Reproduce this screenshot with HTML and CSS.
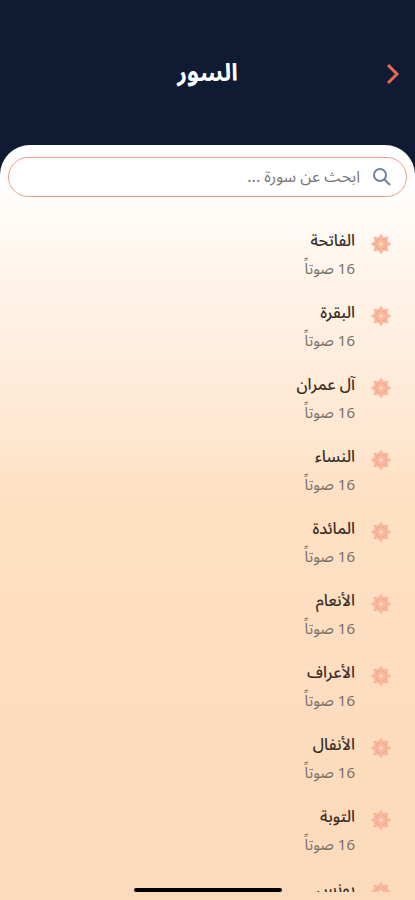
FILE: index.html
```html
<!DOCTYPE html>
<html lang="ar" dir="rtl">
<head>
    <meta charset="UTF-8">
    <meta name="viewport" content="width=device-width, initial-scale=1.0">
    <title>السور</title>
    <link rel="stylesheet" href="styles.css">
</head>
<body>
    <header class="header">
        <button class="back" type="button" aria-label="رجوع">
            <svg width="14" height="22" viewBox="0 0 14 22"><path d="M2 2 L11 11 L2 20"/></svg>
        </button>
        <h1>السور</h1>
    </header>

    <main class="sheet">
        <label class="search">
            <svg width="20" height="20" viewBox="0 0 20 20"><circle cx="8" cy="8" r="6"/><path d="M12 12 L18 18"/></svg>
            <input type="text" id="search" placeholder="ابحث عن سورة ..." aria-label="ابحث عن سورة">
        </label>
        <ul class="list" id="list"></ul>
    </main>

    <div class="home-bar"></div>

    <script src="script.js"></script>
</body>
</html>
```
FILE: styles.css
```css
* {
    box-sizing: border-box;
}
body {
    display: flex;
    flex-direction: column;
    height: 100vh;
    margin: 0;
    overflow: hidden;
    background-color: #0e1b32;
    font-family: "Noto Sans Arabic", "Noto Sans", "DejaVu Sans", sans-serif;
}
.header {
    display: grid;
    grid-template-columns: 44px 1fr 44px;
    align-items: center;
    height: 145px;
    padding-top: 2px;
    flex-shrink: 0;
}
.header h1 {
    margin: 0;
    color: #fff;
    font-size: 24px;
    line-height: 36px;
    text-align: center;
}
.back {
    display: flex;
    justify-content: center;
    padding: 8px;
    border: 0;
    background: none;
    cursor: pointer;
}
.back path {
    fill: none;
    stroke: #e8694f;
    stroke-width: 3;
}

/* Panel */
.sheet {
    display: flex;
    flex-direction: column;
    flex: 1;
    min-height: 0;
    padding: 12px 8px 8px;
    border-radius: 30px 30px 0 0;
    background: linear-gradient(#fff 0%, #fffdfa 7%, #fff2e6 20%, #ffe9d5 35%, #fee0c2 48%, #fdddbf 70%, #fcdbbc 100%);
}
.search {
    display: flex;
    align-items: center;
    flex-shrink: 0;
    gap: 12px;
    height: 40px;
    padding: 0 14px;
    border: 1px solid #ee9c8d;
    border-radius: 20px;
    background-color: #fff;
}
.search svg {
    fill: none;
    stroke: #71839a;
    stroke-width: 2;
}
.search input {
    flex: 1;
    min-width: 0;
    padding: 0;
    border: 0;
    outline: 0;
    background: none;
    color: #333;
    font-family: inherit;
    font-size: 16px;
}
.search input::placeholder {
    color: #777;
    opacity: 1;
}

/* Lista de suras */
.list {
    flex: 1;
    min-height: 0;
    margin: 0;
    padding: 30px 16px 0;
    overflow: hidden;
    list-style: none;
}
.list li {
    height: 72px;
}
.list a {
    display: flex;
    gap: 16px;
    text-decoration: none;
}
.list svg {
    margin-top: 7px;
}
.name, .count {
    display: block;
    line-height: 28px;
}
.name {
    color: #3a2d25;
    font-size: 16px;
    font-weight: 500;
}
.count {
    color: #777069;
    font-size: 15px;
}

.home-bar {
    position: absolute;
    bottom: 8px;
    left: 50%;
    width: 148px;
    height: 4px;
    margin-left: -74px;
    border-radius: 2px;
    background-color: #000;
}
```
FILE: script.js
```js
const suras = ["الفاتحة", "البقرة", "آل عمران", "النساء", "المائدة", "الأنعام", "الأعراف", "الأنفال", "التوبة", "يونس"];

// Puntos de una estrella de ocho puntas
function estrella(radio, interior) {
    const puntos = [];
    for (let i = 0; i < 16; i++) {
        const r = i % 2 === 0 ? radio : interior;
        const a = i * Math.PI / 8;
        puntos.push((10 + r * Math.sin(a)).toFixed(2) + "," + (10 - r * Math.cos(a)).toFixed(2));
    }
    return puntos.join(" ");
}

const icono = `
    <svg width="20" height="20" viewBox="0 0 20 20">
        <polygon points="${estrella(9.6, 6.4)}" fill="#fbc0a4" stroke="#f59f86" stroke-width="0.7"/>
        <polygon points="${estrella(6, 4.6)}" fill="none" stroke="#f28f78" stroke-width="0.6"/>
        <polygon points="${estrella(4, 2)}" fill="#fccbb0" stroke="#f5a18a" stroke-width="0.4"/>
        <circle cx="10" cy="10" r="1.1" fill="#ffeadb"/>
    </svg>`;

function mostrarSuras(lista) {
    document.getElementById("list").innerHTML = lista.map(nombre => `
        <li>
            <a href="#">
                ${icono}
                <span>
                    <span class="name">${nombre}</span>
                    <span class="count">16 صوتاً</span>
                </span>
            </a>
        </li>`).join("");
}

document.getElementById("search").oninput = function() {
    mostrarSuras(suras.filter(nombre => nombre.includes(this.value)));
};

mostrarSuras(suras);
```
